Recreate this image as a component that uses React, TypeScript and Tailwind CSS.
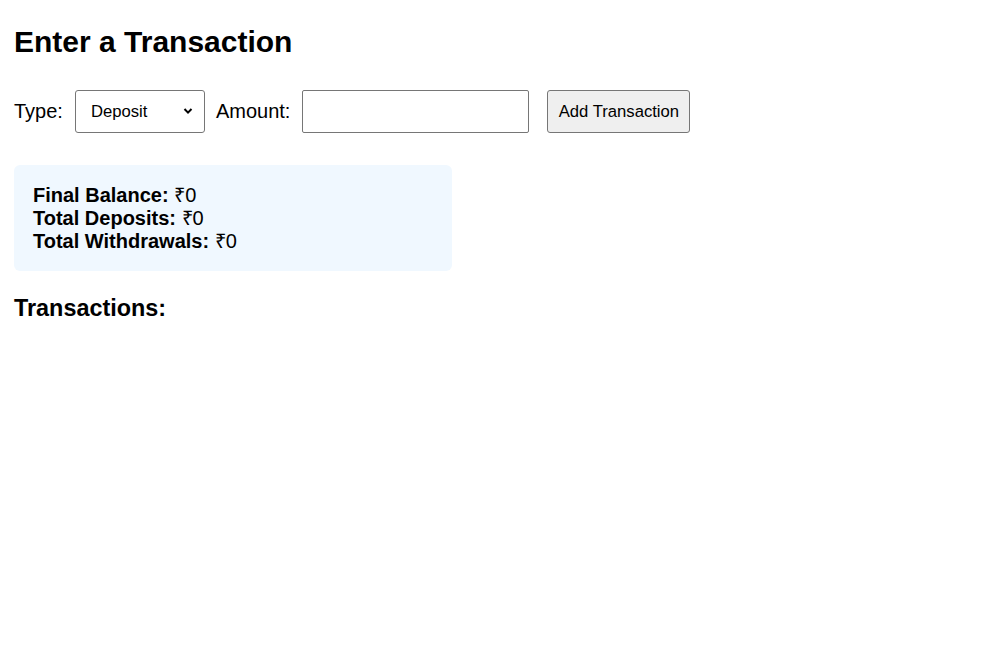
import React, { useState } from 'react';

type TxType = 'deposit' | 'withdrawal';

interface Transaction {
    id: number;
    type: TxType;
    amount: number;
}

const formatRupee = (value: number) => `₹${value}`;

const SummaryLine: React.FC<{ label: string; value: number }> = ({ label, value }) => (
    <div className="leading-[23px]">
        <span className="font-bold">{label}:</span> {formatRupee(value)}
    </div>
);

const App: React.FC = () => {
    const [type, setType] = useState<TxType>('deposit');
    const [amount, setAmount] = useState('');
    const [transactions, setTransactions] = useState<Transaction[]>([]);

    const totalDeposits = transactions.filter(t => t.type === 'deposit').reduce((s, t) => s + t.amount, 0);
    const totalWithdrawals = transactions.filter(t => t.type === 'withdrawal').reduce((s, t) => s + t.amount, 0);
    const finalBalance = totalDeposits - totalWithdrawals;

    const handleAdd = () => {
        const value = parseFloat(amount);
        if (isNaN(value) || value <= 0) return;
        setTransactions(prev => [...prev, { id: Date.now(), type, amount: value }]);
        setAmount('');
    };

    return (
        <div className="min-h-screen bg-white px-[14px] pt-[25px] text-black" style={{ fontFamily: '"Liberation Sans", Arial, sans-serif' }}>
            <h2 className="text-[30px] font-bold leading-[34.5px]">Enter a Transaction</h2>

            <div className="mt-[30px] flex h-[43px] items-center">
                <label className="text-[20px] leading-[23px]">Type:</label>
                <div className="relative ml-[12px] h-[43px] w-[130px]">
                    <select
                        value={type}
                        onChange={e => setType(e.target.value as TxType)}
                        className="h-full w-full appearance-none rounded-[3px] border border-[#767676] bg-white pl-[15px] text-[16.67px] text-black outline-none"
                    >
                        <option value="deposit">Deposit</option>
                        <option value="withdrawal">Withdrawal</option>
                    </select>
                    <svg className="pointer-events-none absolute right-[12px] top-[17px]" width="10" height="8" viewBox="0 0 10 8">
                        <path d="M1.5 2 L5 5.6 L8.5 2" fill="none" stroke="#000" strokeWidth="2" />
                    </svg>
                </div>
                <label className="ml-[11px] text-[20px] leading-[23px]">Amount:</label>
                <input
                    type="number"
                    value={amount}
                    onChange={e => setAmount(e.target.value)}
                    className="ml-[12px] h-[43px] w-[227px] rounded-[2px] border border-[#767676] bg-white px-2 text-[16.67px] outline-none"
                />
                <button
                    onClick={handleAdd}
                    className="ml-[18px] h-[43px] w-[143px] rounded-[3px] border border-[#767676] bg-[#efefef] text-[16.67px] text-black"
                >
                    Add Transaction
                </button>
            </div>

            <div className="mt-[32px] w-[438px] rounded-[6px] bg-[#f0f8ff] px-[19px] pb-[18.5px] pt-[19px] text-[20px]">
                <SummaryLine label="Final Balance" value={finalBalance} />
                <SummaryLine label="Total Deposits" value={totalDeposits} />
                <SummaryLine label="Total Withdrawals" value={totalWithdrawals} />
            </div>

            <h3 className="mt-[23.5px] text-[23.4px] font-bold leading-[27px]">Transactions:</h3>
            <ul>
                {transactions.map(t => (
                    <li key={t.id} className="text-[20px]">
                        {t.type === 'deposit' ? 'Deposit' : 'Withdrawal'}: {formatRupee(t.amount)}
                    </li>
                ))}
            </ul>
        </div>
    );
};

export default App;
